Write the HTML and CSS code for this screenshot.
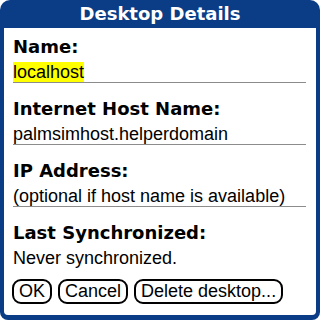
FILE: index.html
```html
<!DOCTYPE html>
<html lang="en">
<head>
  <meta charset="UTF-8">
  <title>Desktop Details</title>
  <link rel="stylesheet" href="styles.css">
</head>
<body>
  <div class="dialog">
    <div class="title">Desktop Details</div>
    <div class="content">
      <div class="field">
        <div class="label">Name:</div>
        <div class="value"><span class="selected">localhost</span></div>
      </div>
      <div class="field">
        <div class="label">Internet Host Name:</div>
        <div class="value">palmsimhost.helperdomain</div>
      </div>
      <div class="field">
        <div class="label">IP Address:</div>
        <div class="value">(optional if host name is available)</div>
      </div>
      <div class="field last">
        <div class="label">Last Synchronized:</div>
        <div class="value plain">Never synchronized.</div>
      </div>
      <div class="buttons">
        <button class="btn">OK</button>
        <button class="btn">Cancel</button>
        <button class="btn">Delete desktop...</button>
      </div>
    </div>
  </div>
</body>
</html>
```

FILE: styles.css
```css
body {
  margin: 0;
  background: white;
  font-family: 'Liberation Sans', Arial, sans-serif;
}
.dialog {
  width: 320px;
  height: 320px;
  box-sizing: border-box;
  background: #0a3d85;
  border-radius: 10px 10px 8px 8px;
  padding: 0 4px 5px 4px;
  display: flex;
  flex-direction: column;
}
.title {
  height: 28px;
  line-height: 28px;
  text-align: center;
  color: white;
  font-family: 'DejaVu Sans', sans-serif;
  font-weight: bold;
  font-size: 18px;
}
.content {
  flex: 1;
  background: white;
  border-radius: 0 0 4px 4px;
  padding: 8px 10px 0 9px;
}
.field {
  margin-bottom: 15px;
}
.field.last {
  margin-bottom: 11px;
}
.label {
  font-family: 'DejaVu Sans', sans-serif;
  font-weight: bold;
  font-size: 18px;
  line-height: 22px;
  margin-bottom: 4px;
}
.value {
  font-size: 18px;
  line-height: 20px;
  height: 20px;
  border-bottom: 1px solid #8c8c8c;
  white-space: nowrap;
}
.value.plain {
  border-bottom: none;
}
.selected {
  background: #ffff00;
}
.buttons {
  display: flex;
  gap: 6px;
  margin-left: -1px;
}
.btn {
  font-family: 'Liberation Sans', Arial, sans-serif;
  font-size: 18px;
  height: 25px;
  line-height: 21px;
  padding: 0 5px;
  border: 2px solid black;
  border-radius: 9px;
  background: white;
  color: black;
}
```
